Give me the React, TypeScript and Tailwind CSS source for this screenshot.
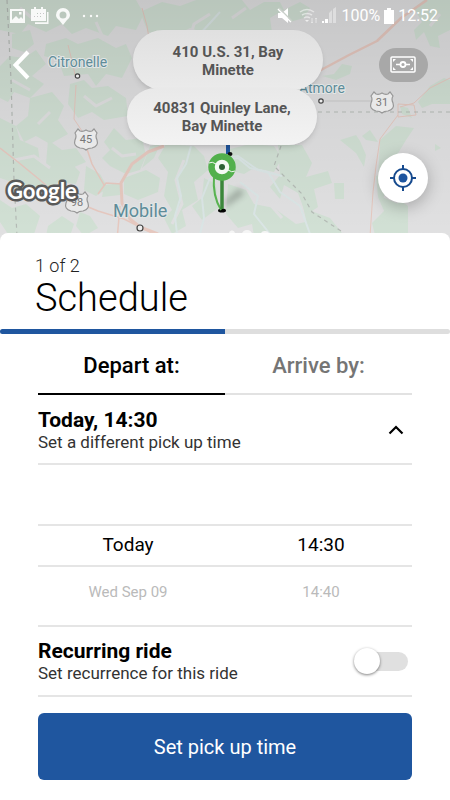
import { useState } from "react"

interface ShieldProps {
  x: number
  y: number
  label: string
}

function RouteShield({ x, y, label }: ShieldProps) {
  return (
    <g transform={`translate(${x} ${y})`}>
      <path
        d="M-8-10l2 2q3 1 6-1 3 2 6 1l2-2 3 4q-2 3 0 7 2 6-5 8-4 0-6 2-2-2-6-2-7-2-5-8 2-4 0-7z"
        fill="#e9e9e9"
        stroke="#979797"
        strokeWidth="1.200"
      />
      <text textAnchor="middle" y="4" fontSize="11" fill="#777">
        {label}
      </text>
    </g>
  )
}

function MapCanvas() {
  return (
    <svg
      viewBox="0 0 450 241"
      preserveAspectRatio="xMidYMin slice"
      className="absolute inset-0 h-full w-full"
      fontFamily="Roboto, sans-serif"
      aria-hidden="true"
    >
      <defs>
        <linearGradient id="shade" x1="0" y1="0" x2="0" y2="1">
          <stop offset="0" stopColor="#000" stopOpacity="0.12" />
          <stop offset="0.5" stopColor="#000" stopOpacity="0.05" />
          <stop offset="1" stopColor="#000" stopOpacity="0" />
        </linearGradient>
        <filter id="soft" x="-50%" y="-50%" width="200%" height="200%">
          <feGaussianBlur stdDeviation="3" />
        </filter>
      </defs>
      <rect width="450" height="241" fill="#e1e1e2" />

      {/* forest */}
      <g fill="#d2e1d5">
        <path d="M0 0h136l8 14-8 16-20-4-8 10-22-8-14 6-10-10-16 8-18-8-8 10-20-4z" />
        <path d="M12 34l18-4 4 14-10 8-12-4zM0 66l10-10 14 2 12-8 10 14-14 12 12 8-14 14-16-6-6 10-8-4z" />
        <path d="M46 44l20-6 12 6 20-6 18 10 10-4 6 14-10 20-16-4-10 12-8-12-24 2-6-16-14-4z" />
        <path d="M70 84l14-4 8 8 16-2 18 12 2 18-24 4-12-8-14 6-10-14z" />
        <path d="M30 98l22-6 12 14-6 14 10 14-18 10-14-8-12 6-8-16 12-10z" />
        <path d="M0 118l16 8 4 14 18 8 2 14 16 6 12-8 12 12-4 12-18-2-10 12-16-8-12 8-8-12-12-4z" />
        <path d="M104 142l10-14 12 12 16-2 4 18-6 14-14 4-16-8-8-8 8-8z" />
        <path d="M48 140l14 10 14-2 10 14-14 6-12 10-14-14z" />
        <path d="M86 166l14 8 8 14-12 8-12-6zM104 185l16-2v12l-18 2zM124 178l22-8 14 8-2 14-20 8-14-6z" />
        <path d="M0 200l12 8 14-4 14 12-6 18H8l-8-12zM48 226l14-10 12 8-4 12H46zM80 212l10 4 8 12-14 8-8-10z" />
        <path d="M140 12l22-10 18 4 16-6h46l8 10 14-8h16l4 8-14 8 2 14h-70l-12-4-20 10-22-6z" />
        <path d="M166 144l28 2 10 10 4 14-14 12 4 18-16 10 4 16-14 8-8-16 8-8-8-14 4-24-10-14z" />
        <path d="M204 178l12 6 2 24-16 12-10-14 10-8zM150 146l10-2-6 14-12 10z" />
        <path d="M226 150l24-6 24 2 8 12-8 14-20-4-10 6-16-4z" />
        <path d="M278 145h24l10 18-6 14 22-6 4 12-18 6 4 18-12 8-8-22-14-8-4 14-10-12 10-12z" />
        <path d="M228 184l18 6 8 14 20 4 22 16 28-6-6 18h-64l-2-12-14 4-12-14z" />
        <path d="M302 202l12 10 16 6 16 20h-36z" />
        <path d="M340 140l16-5 4 6 6 14-2 12-8-14zM362 136l8-6 8 12-12-2zM334 183h10v16h-9z" />
        <path d="M380 140l16-14 18 2-8 12-12 20-8 22-8-4z" />
        <path d="M376 176l10-4 8 24 14 10v34l-32-1-4-16 12-12-6-14zM435 144l6 4-6 3z" />
        <path d="M284 10l16-8 10 6-6 10-14 4zM322 76l12-2 8-10 10 2-2 8-14 6z" />
        <path d="M414 8l10-8h26v30l-12 6 2 12-10-2-6-14-8 8-2-10 8-8z" />
        <path d="M430 86l14-8 6 2v24l-18 0-10 4-4-6zM400 106l8 2 4 10-10-4z" />
      </g>

      {/* clearings and streams */}
      <g fill="none" stroke="#e1e1e2" strokeWidth="3" strokeLinejoin="round">
        <path d="M12 80l18 10M60 60l16 8 14-10M84 96l12 10 16-8M14 160l20-4 16 12M96 22l8 18" />
        <path d="M210 14l-16 10-4 14M246 8l-14 10M112 148l10 8 14-2M184 160l-8 20 6 24-10 20M250 192l18 10 14 16" />
        <path d="M20 8l12 10 14-6M50 112l-12 12M384 196l14 6M440 14l-10 12" />
      </g>
      <g fill="none" stroke="#dbe6e6" strokeWidth="2" strokeLinejoin="round">
        <path d="M191 146l-5 18-9 14 4 18-6 20 2 18M210 178l-8 20 2 20-4 16M222 160l16-2 12 10 18 4 12 20 20 14 10 28" />
        <path d="M282 176l-24-6-20-14-12 2M240 182l18 14-4 18 16 20M200 34l20-22" />
      </g>

      {/* roads */}
      <g fill="none" stroke="#e7c9c0" strokeLinejoin="round">
        <path d="M427 0l-26 18-24 23-28 14-28 15-20 8" strokeWidth="2.500" />
        <path d="M164 146l-16 6-16 12-11 19 1 20 8 16 10 8 18 7" strokeWidth="3" />
        <path d="M120 206l-3 34M76 202l22 9 26 8 28 14M122 184l-16-1-8 11" strokeWidth="1.500" />
        <path d="M0 148l18 14 22 18 19 17M86 146l6 18 12 21" strokeWidth="1.500" />
        <path d="M142 8l5 18 2 12M76 85l-2 34 8 12M68 45l5 20 2 10" strokeWidth="1" />
        <path d="M398 115l-18 24-4 27-3 26-3 44M450 78l-20 10-16 15-14 4M398 104l16 1 2 10-18 2z" strokeWidth="1" />
      </g>
      <path d="M325 101h48" fill="none" stroke="#cbcbcb" />

      {/* borders */}
      <g fill="none" stroke="#b5bbb6" strokeWidth="1.200" strokeDasharray="4 4">
        <path d="M7 0l4 80 3 100 3 56" />
        <path d="M318 112h132M281 146l-7 20 28 28 10 18 32 21" />
      </g>
      <rect width="450" height="241" fill="url(#shade)" />

      <RouteShield x={86} y={139} label="45" />
      <RouteShield x={382} y={102} label="31" />
      <RouteShield x={77} y={202} label="98" />

      <g fill="#5e8c99" stroke="#e2e6e6" strokeWidth="2" paintOrder="stroke">
        <text x="48" y="67" fontSize="14">
          Citronelle
        </text>
        <text x="299" y="93" fontSize="14">
          Atmore
        </text>
        <text x="113" y="217" fontSize="18">
          Mobile
        </text>
      </g>
      <g fill="#eee" stroke="#444" strokeWidth="1.200">
        <circle cx="77.500" cy="76" r="2.200" />
        <circle cx="321" cy="101" r="2.200" />
        <circle cx="140" cy="228" r="3" />
      </g>
      <text
        x="7"
        y="199"
        fontSize="22"
        fontFamily="Lato, sans-serif"
        fontWeight="700"
        fill="#fff"
        stroke="#5a5a5a"
        strokeWidth="5"
        strokeLinejoin="round"
        paintOrder="stroke"
      >
        Google
      </text>

      {/* pick up and drop off pins */}
      <path d="M224 208l20-14-4-6-14 12z" fill="#000" opacity="0.25" filter="url(#soft)" />
      <path d="M228 140v14" stroke="#1f559c" strokeWidth="4" />
      <ellipse cx="230" cy="154" rx="2.500" ry="2" fill="#111" />
      <ellipse cx="222" cy="210.500" rx="4" ry="2" fill="#050505" />
      <path d="M214 176c-1 12 1 24 7 34" fill="none" stroke="#58b350" strokeWidth="2" />
      <path d="M222 180v29" stroke="#3b873b" strokeWidth="3.500" />
      <circle cx="222" cy="167" r="10.500" fill="#f4faf3" stroke="#52b04c" strokeWidth="6.500" />
      <path d="M209 163q3-2 7 1M235 171q-3 2-7-1" fill="none" stroke="#f4faf3" strokeWidth="1" />
      <circle cx="222" cy="167" r="3" fill="#2c6133" />
      <path
        d="M229 234a3 3 0 016-1M242 234a5 4 0 0110 0M261 234a4 3 0 018 0"
        fill="#f5f5f5"
      />
    </svg>
  )
}

function StatusBar() {
  return (
    <div className="relative flex h-8 items-center justify-between pr-3 pl-2 text-white">
      <div className="flex items-center gap-[3px] opacity-90">
        <svg width="20" height="18" viewBox="0 0 20 18" aria-hidden="true">
          <path
            fill="#fff"
            fillRule="evenodd"
            d="M2 2h15v14H2zM4 4v9l4-4 3 3 2-2 2 2V4zM11 5h2.500v2.500H11z"
          />
        </svg>
        <svg width="20" height="18" viewBox="0 0 20 18" aria-hidden="true">
          <path
            fill="#fff"
            fillRule="evenodd"
            d="M0 2h3V0h2v2h5V0h2v2h3v12H0zM6 6v1h1V6zm3 0v1h1V6zm3 0v1h1V6zM3 9v1h1V9zm3 0v1h1V9zm3 0v1h1V9z"
          />
          <path d="M16 5h1.500v12H4v-1.800h12z" fill="#fff" />
        </svg>
        <svg width="18" height="20" viewBox="0 0 18 20" aria-hidden="true">
          <path
            fill="#fff"
            fillRule="evenodd"
            d="M9 2a7 7 0 00-7 7c0 2 1.500 4 3 5l4 5 4-5c1.500-1 3-3 3-5a7 7 0 00-7-7zM9 5.500a3.500 3.500 0 110 7 3.500 3.500 0 010-7z"
          />
        </svg>
        <svg width="30" height="18" viewBox="0 0 30 18" fill="#fff" aria-hidden="true">
          <circle cx="9" cy="9" r="1.200" />
          <circle cx="16" cy="9" r="1.200" />
          <circle cx="22" cy="9" r="1.200" />
        </svg>
      </div>
      <div className="flex items-center gap-1 text-base">
        <svg width="60" height="18" viewBox="0 0 60 18" fill="#fff" aria-hidden="true">
          <path d="M1 6h4l6-5v15l-6-5H1z" />
          <path d="M1 2l13 13" stroke="#fff" strokeWidth="1.500" />
          <path d="M2 1l13 13" stroke="#c8cfc9" strokeWidth="1.200" />
          <g fill="none" stroke="#fff" strokeWidth="1.500" opacity="0.5">
            <path d="M23 5q7-5 14 0M25 8q5-3 10 0M27 11q3-2 6 0" />
            <path d="M35 11v5m-1-1l1 1 1-1M39 16v-5m-1 1l1-1 1 1" strokeWidth="1" />
          </g>
          <path d="M30 15l-2-2h4z" opacity="0.7" />
          <path d="M45 16v-2h2v2zm3 0v-4h3v4z" />
          <path d="M52 16V6l3-3v13zm4 0V2l3-2v16z" opacity="0.4" />
        </svg>
        <span>100%</span>
        <svg width="10" height="16" viewBox="0 0 10 16" aria-hidden="true">
          <path d="M3 2V0h4v2h3v14H0V2z" fill="#fff" />
        </svg>
        <span>12:52</span>
      </div>
    </div>
  )
}

function MapHeader() {
  return (
    <header className="relative h-[241px] overflow-hidden">
      <MapCanvas />
      <p className="absolute top-[30px] left-1/2 ml-[-92px] flex h-[60px] w-[190px] items-center justify-center rounded-full bg-linear-to-b from-[#e0e0e0] to-[#ebebeb] px-8 pt-[2px] text-center text-[15px] leading-[18px] font-bold text-[#555] shadow-md">
        410 U.S. 31, Bay Minette
      </p>
      <p className="absolute top-[88px] left-1/2 ml-[-98px] flex h-[57px] w-[190px] items-center justify-center rounded-full bg-linear-to-b from-[#e9e9e9] to-[#f3f3f3] px-6 text-center text-[15px] leading-[18px] font-bold text-[#555] shadow-md">
        40831 Quinley Lane, Bay Minette
      </p>
      <StatusBar />
      <div className="relative flex items-start justify-between pt-4 pr-[22px] pl-3">
        <button type="button" aria-label="Back" className="mt-[2px]">
          <svg width="20" height="30" viewBox="0 0 20 30" aria-hidden="true">
            <path d="M16 2L3.500 15 16 28" fill="none" stroke="#fff" strokeWidth="4" />
          </svg>
        </button>
        <div className="flex flex-col items-center gap-[71px]">
          <button
            type="button"
            aria-label="Payment"
            className="flex h-[34px] w-[49px] items-center justify-center rounded-full bg-[#a8a8a8]"
          >
            <svg width="26" height="18" viewBox="0 0 26 18" fill="none" stroke="#fff" aria-hidden="true">
              <rect x="1" y="1" width="24" height="15" rx="1" strokeWidth="1.500" />
              <path d="M3 3h3L3 6zM23 3h-3l3 3zM3 14h3l-3-3zM23 14h-3l3-3z" fill="#fff" stroke="none" />
              <path d="M6 8.500h4M16 8.500h4" strokeWidth="1.300" />
              <circle cx="13" cy="8.500" r="2.500" strokeWidth="1.800" />
            </svg>
          </button>
          <button
            type="button"
            aria-label="My location"
            className="flex size-[50px] items-center justify-center rounded-full bg-white shadow-[0_4px_16px_rgba(0,0,0,0.25)]"
          >
            <svg width="26" height="26" viewBox="0 0 26 26" aria-hidden="true">
              <circle cx="13" cy="13" r="9" fill="none" stroke="#164a8e" strokeWidth="2" />
              <circle cx="13" cy="13" r="4.500" fill="#1e559f" />
              <path d="M13 0v5M13 21v5M0 13h5M21 13h5" stroke="#164a8e" strokeWidth="2" />
            </svg>
          </button>
        </div>
      </div>
    </header>
  )
}

export default function App() {
  const [mode, setMode] = useState("depart")
  const [recurring, setRecurring] = useState(false)

  const tabClass = (active: boolean) =>
    active
      ? "flex-1 border-b-2 border-black pt-1 text-black"
      : "flex-1 border-b-2 border-[#e2e2e2] pt-1 text-[#757575]"

  return (
    <div className="min-h-screen bg-white font-[Roboto,sans-serif] text-black">
      <MapHeader />
      <main className="relative -mt-2 rounded-t-lg bg-white">
        <div className="px-[35px] pt-5">
          <p className="text-lg leading-[26px] font-light text-[#222]">1 of 2</p>
          <h1 className="text-[38px] leading-[38px] font-light">Schedule</h1>
        </div>
        <div
          role="progressbar"
          aria-label="Step"
          aria-valuenow={1}
          aria-valuemin={0}
          aria-valuemax={2}
          className="mt-3 h-[5px] rounded-full bg-[#dedede]"
        >
          <div className="h-full w-1/2 rounded-l-full bg-[#1f569f]" />
        </div>

        <div className="px-[38px]">
          <div role="tablist" className="flex h-[61px] text-[22px] font-medium">
            <button
              type="button"
              role="tab"
              aria-selected={mode === "depart"}
              onClick={() => setMode("depart")}
              className={tabClass(mode === "depart")}
            >
              Depart at:
            </button>
            <button
              type="button"
              role="tab"
              aria-selected={mode === "arrive"}
              onClick={() => setMode("arrive")}
              className={tabClass(mode === "arrive")}
            >
              Arrive by:
            </button>
          </div>

          <button
            type="button"
            aria-expanded="true"
            className="flex h-[70px] w-full items-center justify-between border-b-2 border-[#e5e5e5] pt-[2px] pr-2 text-left"
          >
            <span>
              <span className="block text-[21px] leading-6 font-bold">Today, 14:30</span>
              <span className="block text-[17px] leading-5 text-[#333]">Set a different pick up time</span>
            </span>
            <svg width="16" height="10" viewBox="0 0 16 10" aria-hidden="true">
              <path d="M1.500 8.500L8 2l6.500 6.500" fill="none" stroke="#000" strokeWidth="2.200" />
            </svg>
          </button>

          <div className="border-b-2 border-[#e5e5e5] pt-[59px] text-center">
            <div className="flex h-[43px] items-center border-y-2 border-[#e5e5e5] text-[19px]">
              <span className="w-[180px] grow">Today</span>
              <span className="w-[194px] grow pl-3">14:30</span>
            </div>
            <div className="flex h-[58px] items-center pb-2 text-[15px] text-[#bababa]">
              <span className="w-[180px] grow">Wed Sep 09</span>
              <span className="w-[194px] grow pl-3">14:40</span>
            </div>
          </div>

          <label className="flex h-[70px] cursor-pointer items-center justify-between border-b-2 border-[#e5e5e5] pr-1">
            <span>
              <span className="block text-[21px] leading-6 font-bold">Recurring ride</span>
              <span className="block text-[17px] leading-5 text-[#333]">Set recurrence for this ride</span>
            </span>
            <span className="relative flex h-[26px] w-[54px] items-center justify-end">
              <input
                type="checkbox"
                role="switch"
                checked={recurring}
                onChange={(e) => setRecurring(e.target.checked)}
                className="peer h-[19px] w-[44px] appearance-none rounded-full bg-[#e0e0e0] checked:bg-[#1f569f]"
              />
              <span className="pointer-events-none absolute top-0 left-0 size-[26px] rounded-full bg-white shadow-[0_1px_3px_rgba(0,0,0,0.5)] peer-checked:left-7" />
            </span>
          </label>

          <button
            type="button"
            className="mt-4 mb-5 h-[67px] w-full rounded-md bg-[#1f569f] text-xl text-white"
          >
            Set pick up time
          </button>
        </div>
      </main>
    </div>
  )
}
